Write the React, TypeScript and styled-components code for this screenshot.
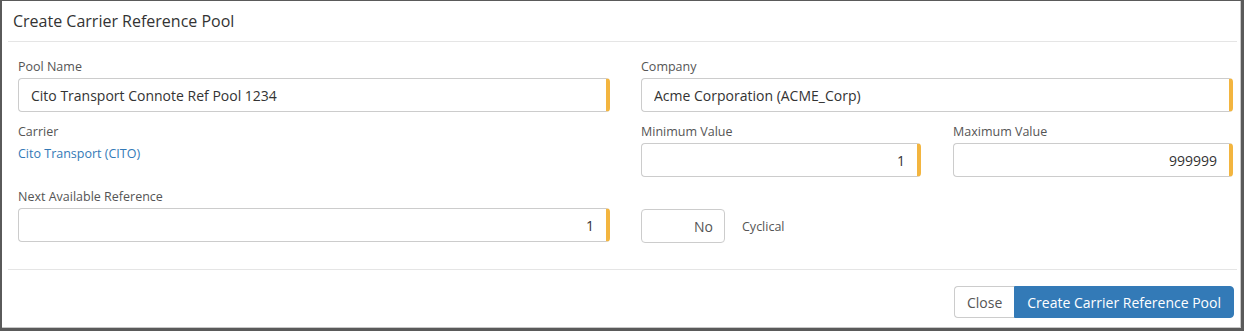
import React from 'react';
import styled, { createGlobalStyle } from 'styled-components';

const GlobalStyle = createGlobalStyle`
  html, body {
    margin: 0;
    padding: 0;
    background: #fff;
  }
  body {
    font-family: 'Open Sans', 'Liberation Sans', sans-serif;
    color: #333;
  }
`;

function App() {
  return (
    <>
      <GlobalStyle />
      <Frame>
        <Inner>
          <Header>
            <Title>Create Carrier Reference Pool</Title>
          </Header>
          <Body>
            <Field>
              <Label>Pool Name</Label>
              <Input readOnly value='Cito Transport Connote Ref Pool 1234' $required />
            </Field>
            <Field>
              <Label>Company</Label>
              <Input readOnly value='Acme Corporation (ACME_Corp)' $required />
            </Field>
            <Field>
              <Label>Carrier</Label>
              <CarrierLink href='#'>Cito Transport (CITO)</CarrierLink>
            </Field>
            <Pair>
              <Field>
                <Label>Minimum Value</Label>
                <Input readOnly value='1' $required $right />
              </Field>
              <Field>
                <Label>Maximum Value</Label>
                <Input readOnly value='999999' $required $right />
              </Field>
            </Pair>
            <Field>
              <Label>Next Available Reference</Label>
              <Input readOnly value='1' $required $right />
            </Field>
            <ToggleRow>
              <Toggle type='button'>No</Toggle>
              <ToggleLabel>Cyclical</ToggleLabel>
            </ToggleRow>
          </Body>
          <Footer>
            <ButtonGroup>
              <CloseButton type='button'>Close</CloseButton>
              <PrimaryButton type='button'>Create Carrier Reference Pool</PrimaryButton>
            </ButtonGroup>
          </Footer>
        </Inner>
      </Frame>
    </>
  );
}

export default App;

const Frame = styled.div`
  width: 1244px;
  height: 331px;
  box-sizing: border-box;
  border-style: solid;
  border-color: #5a5a5a;
  border-width: 1px 3px 3px 2px;
  background: #fff;
`;

const Inner = styled.div`
  height: 100%;
  box-sizing: border-box;
  border: 1px solid #c8c8c8;
  border-top: none;
  border-left: none;
  padding: 0 3px 0 6px;
  display: flex;
  flex-direction: column;
`;

const Header = styled.div`
  height: 41px;
  border-bottom: 1px solid #e5e5e5;
  display: flex;
  align-items: center;
  padding-left: 5px;
  padding-bottom: 1px;
  box-sizing: border-box;
`;

const Title = styled.div`
  font-size: 16px;
  color: #333;
`;

const Body = styled.div`
  display: grid;
  grid-template-columns: 592px 592px;
  column-gap: 31px;
  row-gap: 11px;
  padding: 16px 0 26px 10px;
  border-bottom: 1px solid #e5e5e5;
`;

const Pair = styled.div`
  display: grid;
  grid-template-columns: 280px 280px;
  column-gap: 32px;
`;

const Field = styled.div`
  display: flex;
  flex-direction: column;
`;

const Label = styled.label`
  font-size: 12.5px;
  line-height: 17px;
  color: #555;
  margin-bottom: 3px;
`;

const Input = styled.input<{ $required?: boolean; $right?: boolean }>`
  box-sizing: border-box;
  height: 34px;
  width: 100%;
  border: 1px solid #ccc;
  border-right: ${(p) => (p.$required ? '4px solid #f3b53f' : '1px solid #ccc')};
  border-radius: 4px;
  padding: 0 12px;
  text-align: ${(p) => (p.$right ? 'right' : 'left')};
  font-family: 'Open Sans', 'Liberation Sans', sans-serif;
  font-size: 14px;
  color: #333;
  background: #fff;
  outline: none;
`;

const CarrierLink = styled.a`
  font-size: 12.5px;
  line-height: 17px;
  margin-top: 2px;
  color: #337ab7;
  text-decoration: none;
`;

const ToggleRow = styled.div`
  display: flex;
  align-items: center;
  gap: 17px;
  padding-top: 21px;
`;

const Toggle = styled.button`
  box-sizing: border-box;
  width: 84px;
  height: 34px;
  border: 1px solid #ccc;
  border-radius: 4px;
  background: #fff;
  text-align: right;
  padding: 0 11px 0 0;
  font-family: 'Open Sans', 'Liberation Sans', sans-serif;
  font-size: 14px;
  color: #555;
`;

const ToggleLabel = styled.span`
  font-size: 12.5px;
  color: #555;
`;

const Footer = styled.div`
  display: flex;
  justify-content: flex-end;
  padding: 16px 3px 0 0;
`;

const ButtonGroup = styled.div`
  display: flex;
`;

const CloseButton = styled.button`
  box-sizing: border-box;
  height: 32px;
  padding: 0 12px;
  border: 1px solid #ccc;
  border-right: none;
  border-radius: 4px 0 0 4px;
  background: #fff;
  color: #555;
  font-family: 'Open Sans', 'Liberation Sans', sans-serif;
  font-size: 14px;
`;

const PrimaryButton = styled.button`
  box-sizing: border-box;
  height: 32px;
  padding: 0 12px;
  border: 1px solid #337ab7;
  border-radius: 0 4px 4px 0;
  background: #337ab7;
  color: #fff;
  font-family: 'Open Sans', 'Liberation Sans', sans-serif;
  font-size: 14px;
`;
